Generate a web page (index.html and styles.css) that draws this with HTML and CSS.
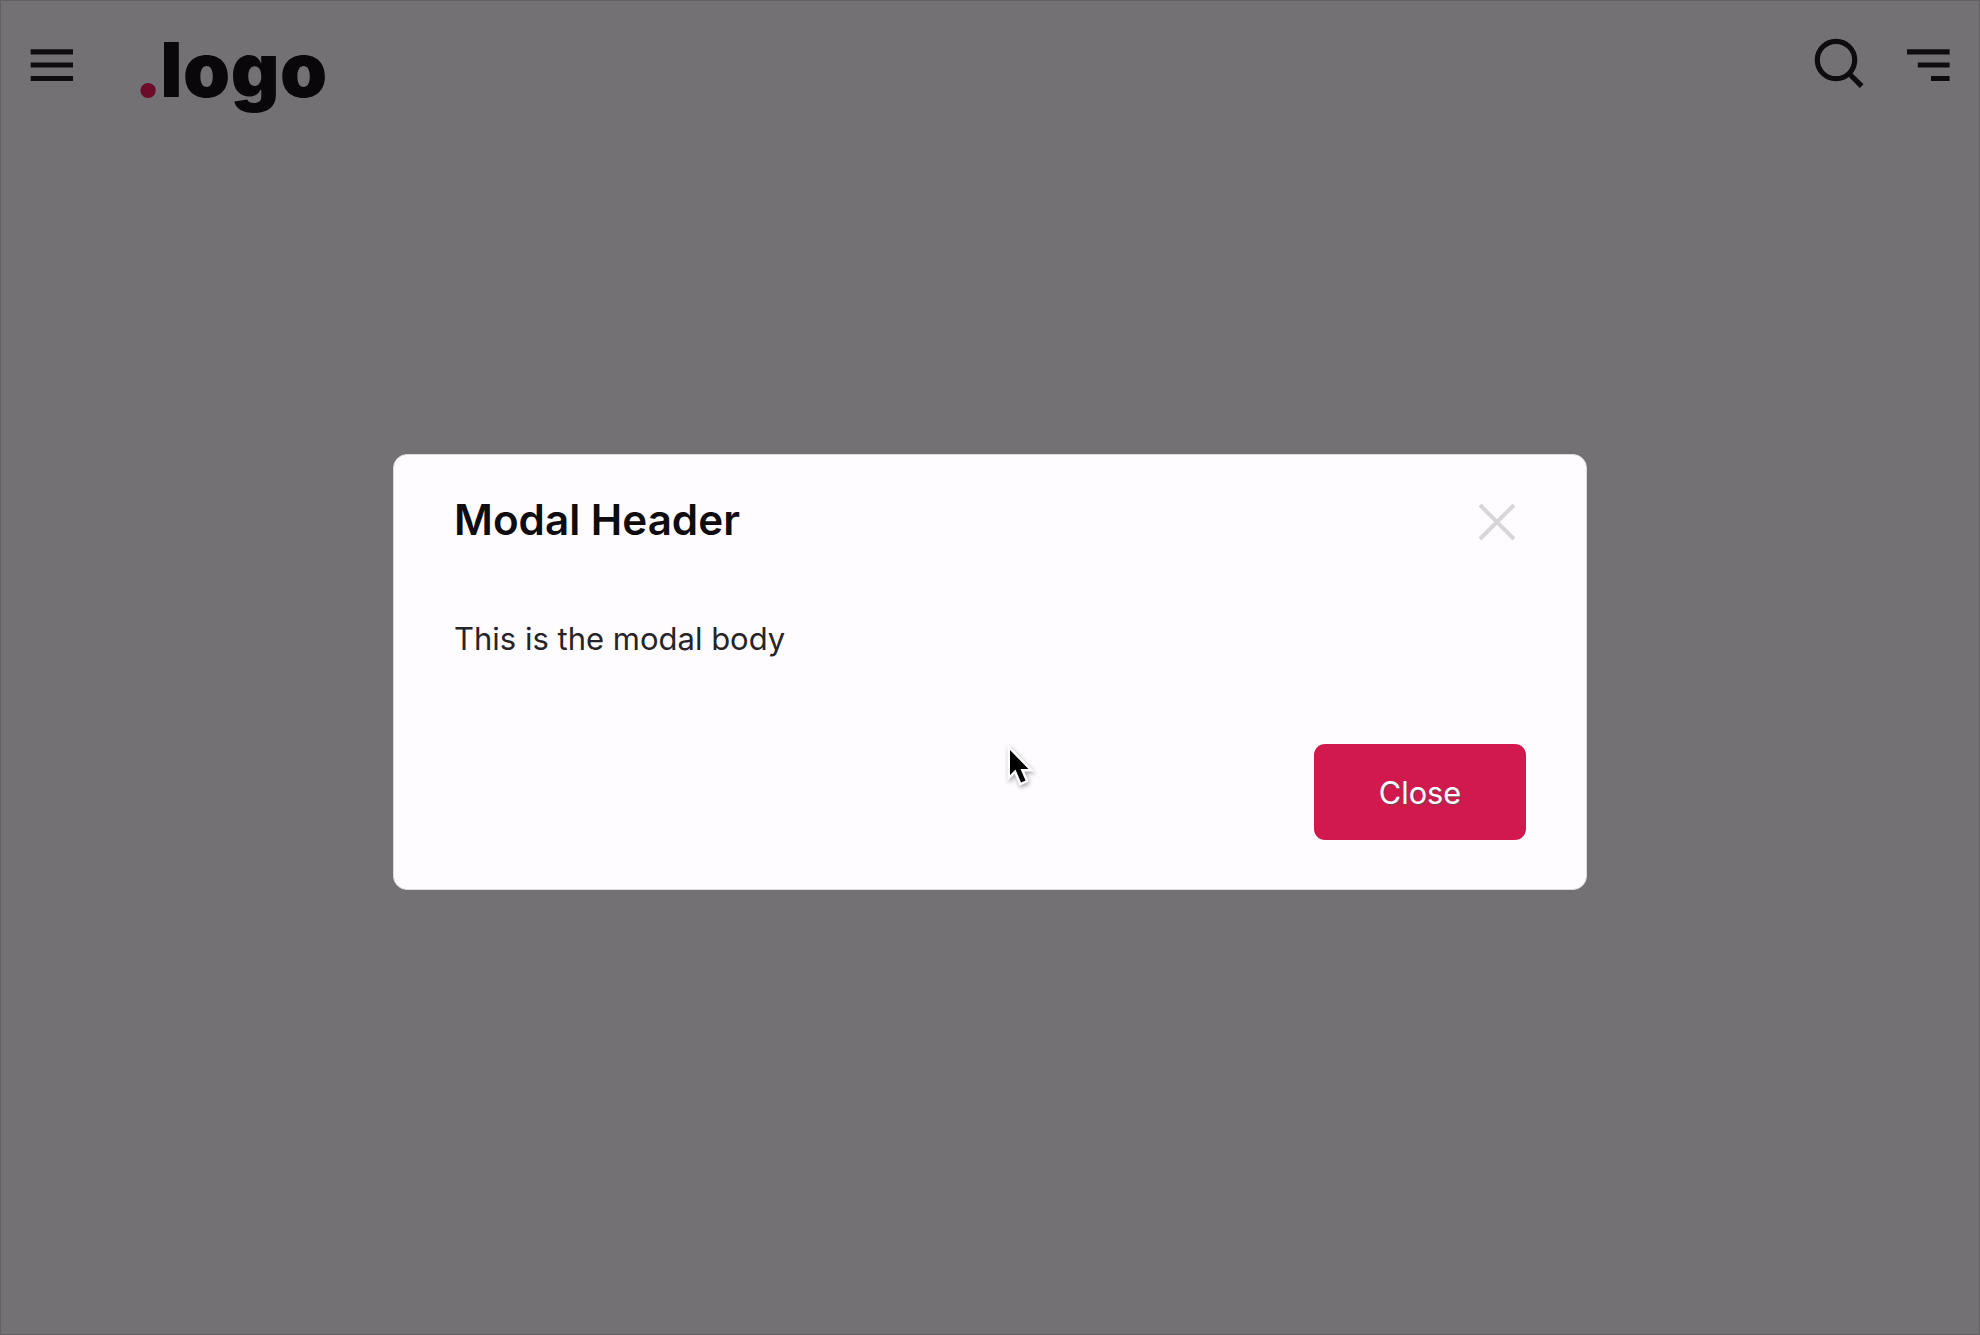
FILE: index.html
```html
<!DOCTYPE html>
<html lang="en">
<head>
<meta charset="utf-8">
<title>Modal</title>
<link rel="stylesheet" href="styles.css">
</head>
<body>
<header class="topbar">
  <svg class="icon-menu" width="43" height="33" viewBox="0 0 43 33"><path d="M.7 2.8H43M.7 16H43M.7 29.5H43"/></svg>
  <div class="logo"><span class="logo-dot">.</span>logo</div>
  <svg class="icon-search" width="50" height="50" viewBox="0 0 50 50"><circle cx="22" cy="22" r="18.7"/><path d="M34.5 35L47.7 48.2"/></svg>
  <svg class="icon-filter" width="43" height="33" viewBox="0 0 43 33"><path d="M0 2.8H42.6M10.8 16H42.6M24 29.5H42.6"/></svg>
</header>
<main class="stage">
  <section class="modal" role="dialog">
    <div class="modal-head">
      <h1 class="modal-title">Modal Header</h1>
      <svg class="icon-close" width="38" height="38" viewBox="0 0 38 38"><path d="M2 2L36 36M36 2L2 36"/></svg>
    </div>
    <p class="modal-body">This is the modal body</p>
    <div class="modal-foot"><button class="button">Close</button></div>
  </section>
</main>
<svg class="cursor" width="40" height="50" viewBox="0 0 40 50"><path d="M6 6V31L11.5 25.5L17 38.5L21.5 36.5L16.5 25H24.500Z"/></svg>
</body>
</html>
```
FILE: styles.css
```css
* { box-sizing: border-box; }
body {
  margin: 0;
  height: 1335px;
  display: flex;
  flex-direction: column;
  overflow: hidden;
  background: #747174;
  border: 1px solid #646164;
  font-family: Inter, "Liberation Sans", sans-serif;
  color: #0e0c0f;
}
svg { display: block; flex: none; fill: none; }
.topbar {
  display: flex;
  align-items: flex-start;
  height: 130px;
  padding: 0 29px;
}
.icon-menu, .icon-search, .icon-filter { stroke: #0e0c0f; stroke-width: 5.2; }
.icon-menu { margin-top: 48px; }
.logo {
  margin: 24px auto 0 61px;
  font-size: 75.5px;
  letter-spacing: .5px;
  line-height: 90px;
  font-weight: 900;
  color: #09070a;
}
.logo-dot { color: #6b0d2a; margin-right: -2.5px; }
.icon-search { margin: 37px 43px 0 0; }
.icon-filter { margin-top: 48px; }
.stage { flex: 1; display: flex; justify-content: center; align-items: flex-start; padding-top: 323px; }
.modal {
  width: 1194px;
  height: 436px;
  padding: 37px 60px 49px;
  display: flex;
  flex-direction: column;
  background: #fefcff;
  border: 1px solid #dddbde;
  border-radius: 14px;
}
.modal-head { display: flex; justify-content: space-between; align-items: flex-start; }
.modal-title { margin: 0; font-size: 42.2px; line-height: 55px; font-weight: 600; }
.icon-close { margin: 10.5px 10px 0 0; stroke: #d7d5d8; stroke-width: 4; }
.modal-body { margin: 72px 0 0; font-size: 31px; line-height: 40px; color: #262427; }
.modal-foot { display: flex; justify-content: flex-end; margin-top: auto; }
.button {
  width: 212px;
  height: 96px;
  padding: 2px 0 0;
  border: 0;
  border-radius: 11px;
  background: #d2194e;
  color: #fefcff;
  font: 400 30.7px/40px Inter, "Liberation Sans", sans-serif;
  text-shadow: 1px 1px 1px #6b4653;
}
.cursor { position: absolute; left: 1003.5px; top: 744px; fill: #000; stroke: #fff; stroke-width: 5; paint-order: stroke; filter: drop-shadow(1px 2px 2px rgba(0, 0, 0, .35)); }
```
